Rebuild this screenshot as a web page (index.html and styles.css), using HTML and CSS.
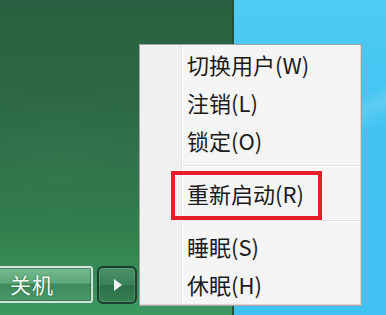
FILE: index.html
```html
<!DOCTYPE html>
<html lang="zh-CN">
<head>
<meta charset="utf-8">
<title>关机菜单</title>
<link rel="stylesheet" href="styles.css">
</head>
<body>
<div class="desktop">
  <div class="green">
    <div class="start-row">
      <div class="shutdown-btn"><span class="shutdown-label">关机</span></div>
      <div class="arrow-btn"><span class="arrow"></span></div>
    </div>
  </div>
  <div class="blue"></div>

  <div class="menu">
    <div class="item">切换用户(W)</div>
    <div class="item">注销(L)</div>
    <div class="item">锁定(O)</div>
    <div class="sep sep-a"></div>
    <div class="item item-marked">重新启动(R)<span class="mark"></span></div>
    <div class="sep sep-b"></div>
    <div class="item">睡眠(S)</div>
    <div class="item">休眠(H)</div>
  </div>
</div>
</body>
</html>
```

FILE: styles.css
```css
html, body {
  margin: 0;
  padding: 0;
}
body {
  width: 386px;
  height: 315px;
  overflow: hidden;
  font-family: "Noto Sans CJK SC", "Noto Sans", sans-serif;
}
.desktop {
  position: relative;
  display: flex;
  width: 386px;
  height: 315px;
}
.green {
  width: 234px;
  border-right: 2px solid #22513a;
  display: flex;
  flex-direction: column;
  justify-content: flex-end;
  padding-bottom: 11px;
  box-sizing: border-box;
  background:
    radial-gradient(ellipse 140px 60px at 60px 150px, rgba(70,140,90,0.18), transparent),
    linear-gradient(to bottom, #2a6041 0%, #2d6a46 40%, #33804f 75%, #3c9861 100%);
}
.blue {
  flex: 1;
  background:
    linear-gradient(155deg, transparent 0 40%, rgba(255,255,255,0.14) 44%, transparent 50%),
    linear-gradient(to bottom, #50cbf4 0%, #42c4f2 35%, #3fc2f2 100%);
}
.start-row {
  display: flex;
  align-items: flex-start;
  gap: 4px;
  margin-left: -8px;
}
.shutdown-btn {
  width: 101px;
  height: 37px;
  box-sizing: border-box;
  border: 2px solid #cfe6d6;
  border-radius: 3px;
  background: linear-gradient(to bottom, #74bb8f 0%, #5ea879 45%, #3f8a5a 50%, #4a9a69 100%);
  box-shadow: inset 0 0 0 1px rgba(40,90,60,0.5);
  display: flex;
  align-items: center;
  padding-left: 16px;
}
.shutdown-label {
  color: #f4fbf6;
  font-size: 21px;
  line-height: 1;
  letter-spacing: 1px;
  text-shadow: 0 0 2px rgba(20,70,40,0.6);
}
.arrow-btn {
  width: 40px;
  height: 38px;
  box-sizing: border-box;
  border: 2px solid #1a3f2c;
  border-radius: 6px;
  background: linear-gradient(to bottom, #4a9167 0%, #3a8257 48%, #2b7047 52%, #357f52 100%);
  box-shadow: inset 0 0 0 1px rgba(120,190,150,0.35);
  display: flex;
  align-items: center;
  justify-content: center;
}
.arrow {
  width: 0;
  height: 0;
  border-top: 6px solid transparent;
  border-bottom: 6px solid transparent;
  border-left: 8px solid #f2f2f2;
  margin-left: 1px;
}
.menu {
  position: absolute;
  left: 139px;
  top: 44px;
  width: 223px;
  height: 262px;
  box-sizing: border-box;
  border: 1px solid #a9a2a2;
  box-shadow: inset -1px 0 0 #ddd6d6, inset 0 -1px 0 #ddd6d6;
  padding-top: 2px;
  background: linear-gradient(to right, #f0f0f0 0 41px, #e2e3e3 41px 42px, #ffffff 42px 43px, #f5f5f5 43px);
}
.item {
  position: relative;
  height: 38px;
  line-height: 34px;
  padding-left: 47px;
  font-size: 22px;
  color: #1b1b1b;
  white-space: nowrap;
}
.sep {
  height: 1px;
  margin-left: 43px;
  margin-right: 1px;
  background: #e0e0e0;
  border-bottom: 1px solid #ffffff;
}
.sep-a {
  margin-top: 4px;
  margin-bottom: 9px;
}
.sep-b {
  margin-top: 6px;
  margin-bottom: 7px;
}
.mark {
  position: absolute;
  left: 31px;
  top: -5px;
  width: 151px;
  height: 49px;
  box-sizing: border-box;
  border: 4px solid #e61e28;
}
```
